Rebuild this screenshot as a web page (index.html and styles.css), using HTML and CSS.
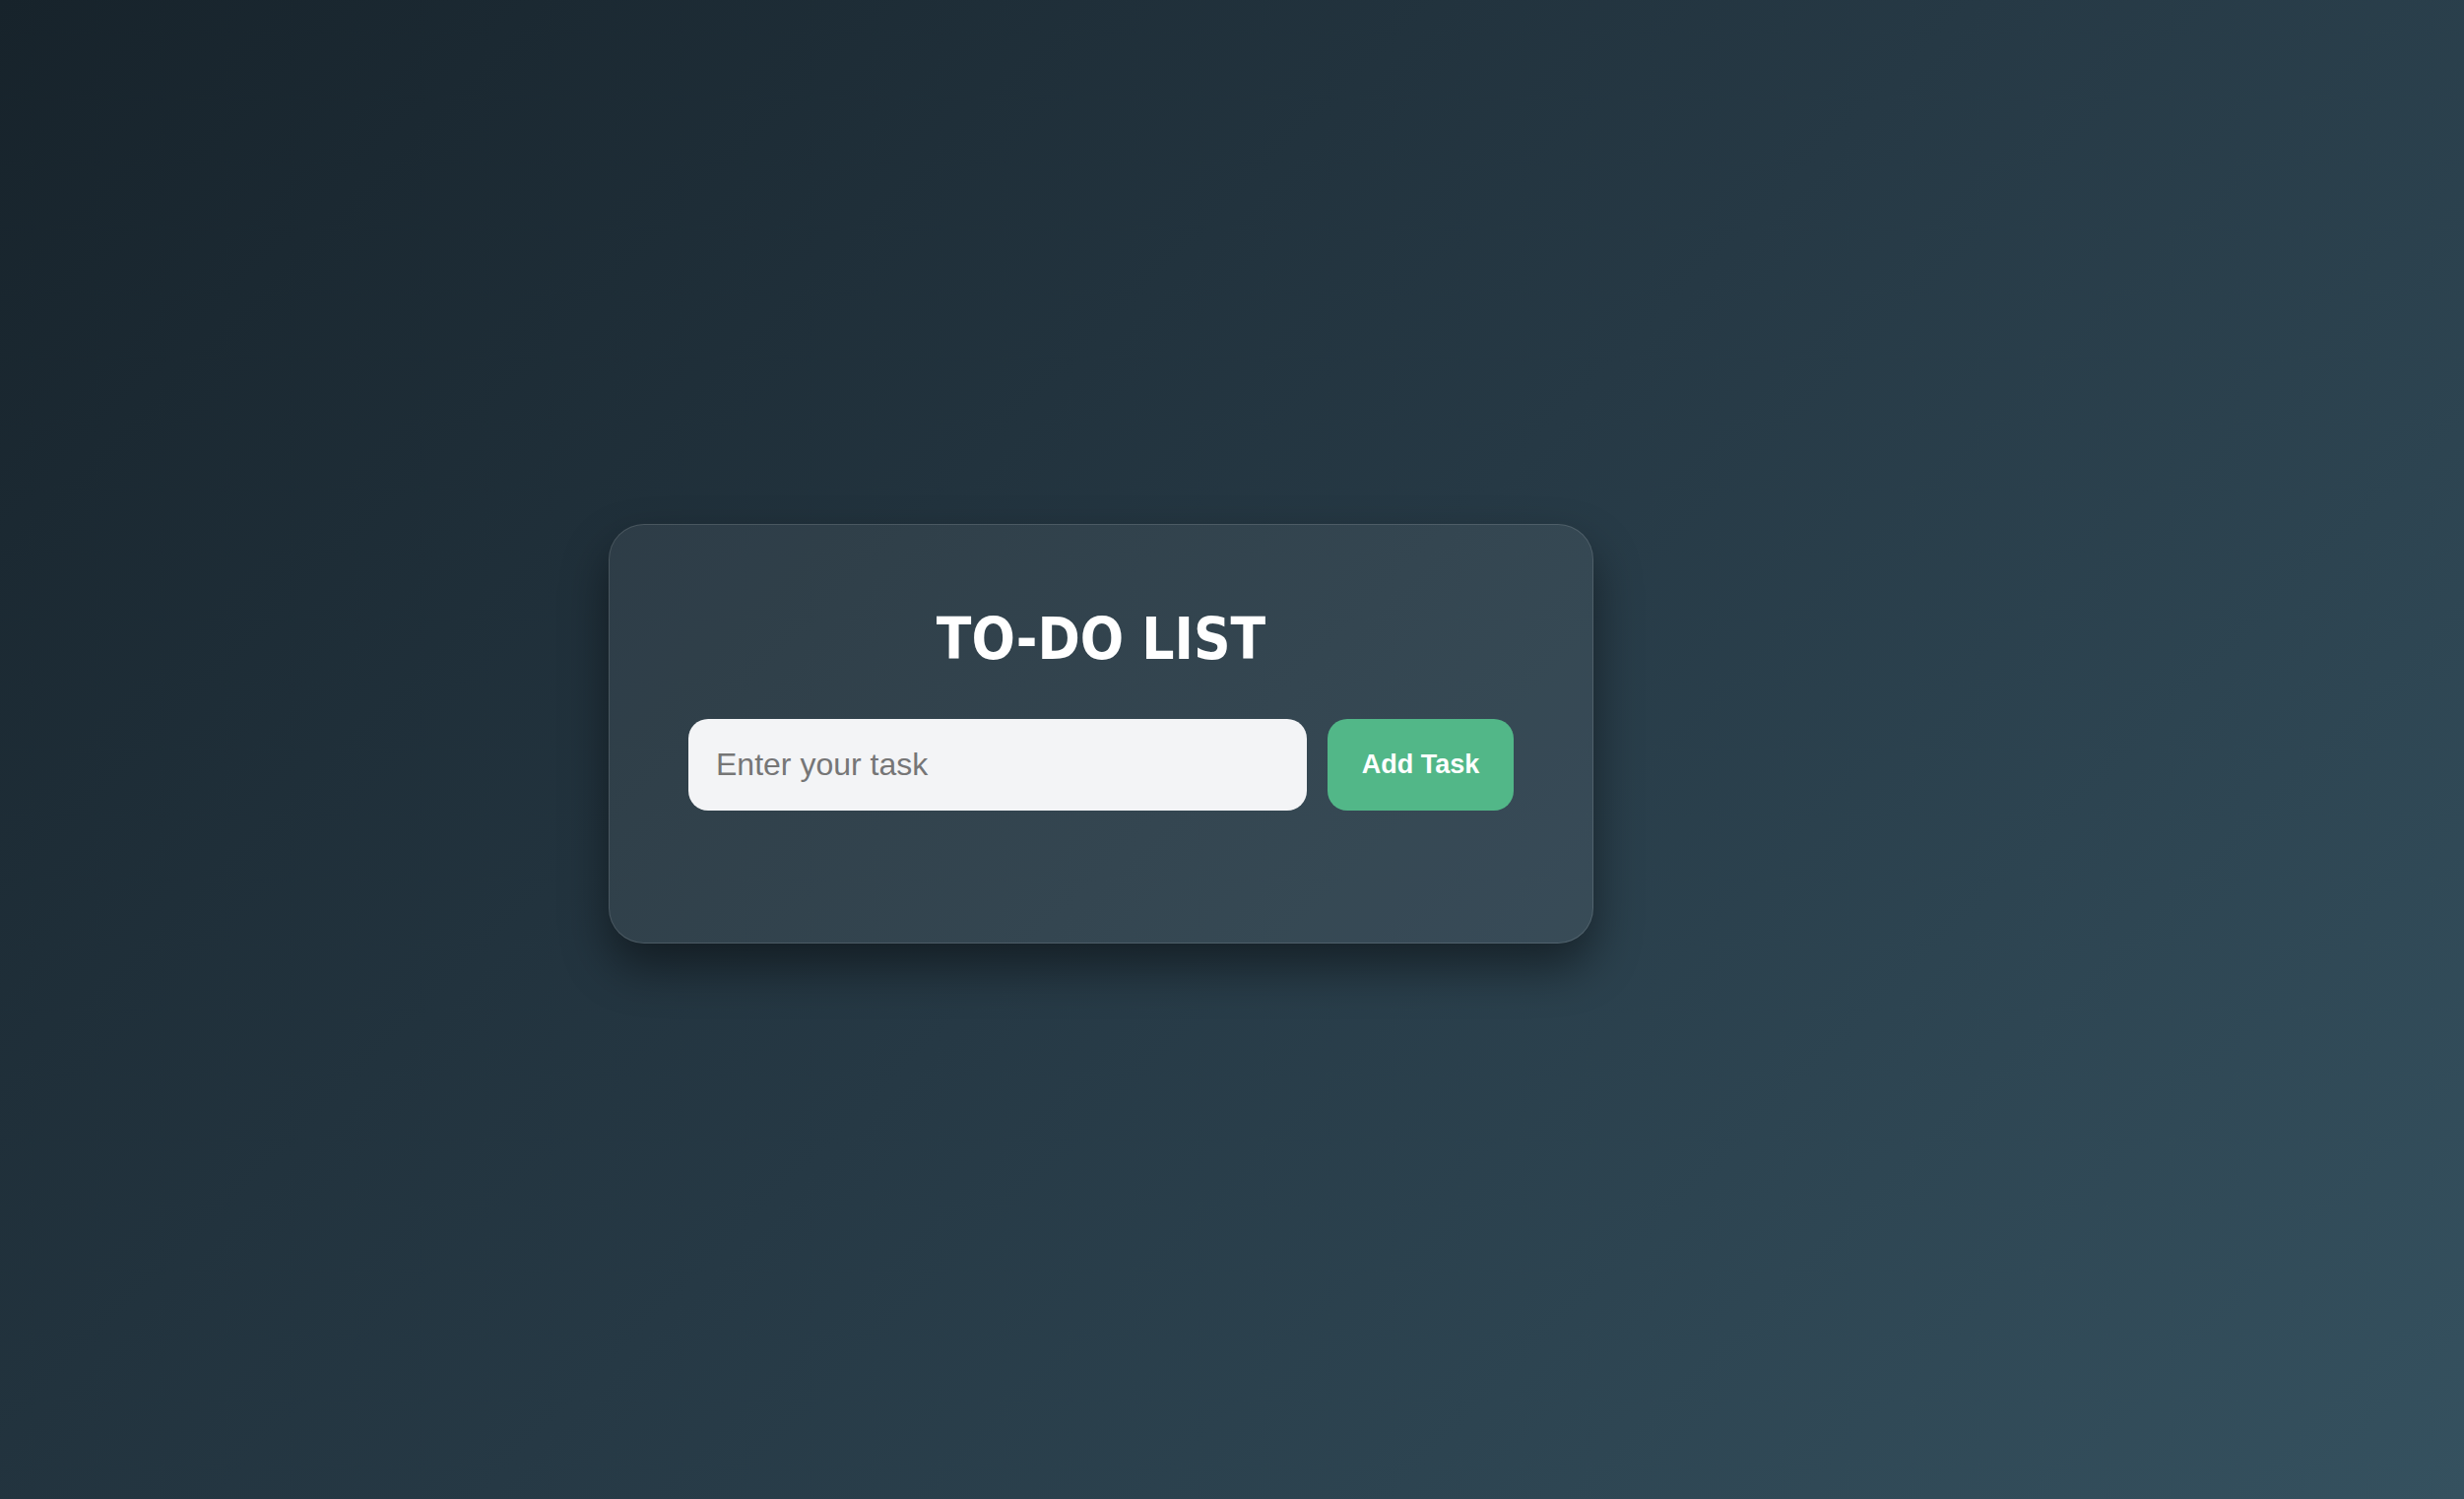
FILE: index.html
```html
<!DOCTYPE html>
<html lang="en">
<head>
<meta charset="UTF-8">
<title>To-Do List</title>
<link rel="stylesheet" href="styles.css">
</head>
<body>
<main class="page">
  <section class="card">
    <h1 class="title">TO-DO LIST</h1>
    <div class="entry">
      <input class="task-input" type="text" placeholder="Enter your task">
      <button class="add-btn" type="button">Add Task</button>
    </div>
    <ul class="task-list"></ul>
  </section>
</main>
</body>
</html>
```

FILE: styles.css
```css
* { box-sizing: border-box; }

html, body {
  margin: 0;
  height: 100%;
}

body {
  background: linear-gradient(135deg, #17232b 0%, #263945 50%, #35515f 100%);
  font-family: "Liberation Sans", Arial, sans-serif;
}

.page {
  min-height: 100vh;
  display: flex;
  align-items: center;
  justify-content: center;
  padding: 0 266px 33px 0;
}

.card {
  width: 1000px;
  padding: 82px 80px 84px;
  border-radius: 36px;
  background: rgba(255, 255, 255, 0.065);
  border: 1px solid rgba(255, 255, 255, 0.13);
  box-shadow: 0 24px 48px rgba(0, 0, 0, 0.45);
}

.title {
  margin: 0 0 47px;
  text-align: center;
  color: #ffffff;
  font-family: "DejaVu Sans Condensed", "DejaVu Sans", sans-serif;
  font-weight: bold;
  font-size: 58px;
  line-height: 68px;
}

.entry {
  display: flex;
  gap: 21px;
}

.task-input {
  flex: 1;
  min-width: 0;
  height: 93px;
  padding: 0 28px;
  border: none;
  border-radius: 20px;
  background: #f3f4f6;
  font-family: "Liberation Sans", Arial, sans-serif;
  font-size: 32px;
  color: #333;
  outline: none;
}

.task-input::placeholder {
  color: #767676;
}

.add-btn {
  width: 189px;
  height: 93px;
  border: none;
  border-radius: 20px;
  background: #52b788;
  color: #ffffff;
  font-family: "Liberation Sans", Arial, sans-serif;
  font-weight: bold;
  font-size: 27px;
  cursor: pointer;
}

.task-list {
  list-style: none;
  margin: 50px 0 0;
  padding: 0;
}
```
